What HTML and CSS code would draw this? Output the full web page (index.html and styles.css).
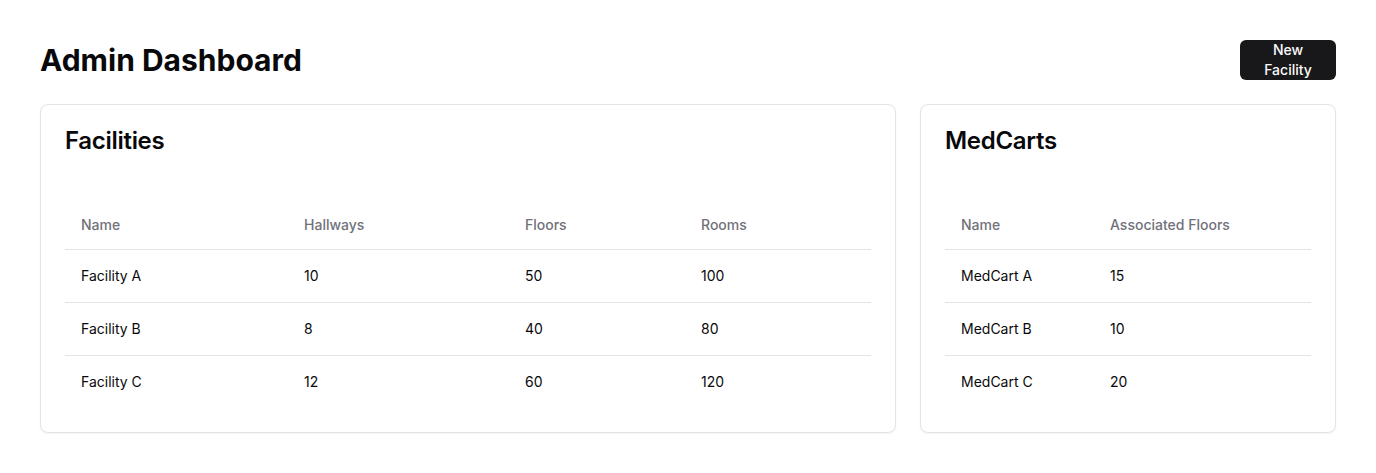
FILE: index.html
```html
<!DOCTYPE html>
<html lang="en">
<head>
<meta charset="utf-8">
<title>Admin Dashboard</title>
<link rel="stylesheet" href="styles.css">
</head>
<body>
<div class="page">
  <header class="topbar">
    <h1 class="page-title">Admin Dashboard</h1>
    <button class="btn">New Facility</button>
  </header>
  <div class="grid">
    <section class="card">
      <h2 class="card-title">Facilities</h2>
      <table class="table">
        <colgroup>
          <col class="c-f1"><col class="c-f2"><col class="c-f3"><col>
        </colgroup>
        <thead>
          <tr><th>Name</th><th>Hallways</th><th>Floors</th><th>Rooms</th></tr>
        </thead>
        <tbody>
          <tr><td>Facility A</td><td>10</td><td>50</td><td>100</td></tr>
          <tr><td>Facility B</td><td>8</td><td>40</td><td>80</td></tr>
          <tr><td>Facility C</td><td>12</td><td>60</td><td>120</td></tr>
        </tbody>
      </table>
    </section>
    <section class="card">
      <h2 class="card-title">MedCarts</h2>
      <table class="table">
        <colgroup>
          <col class="c-m1"><col>
        </colgroup>
        <thead>
          <tr><th>Name</th><th>Associated Floors</th></tr>
        </thead>
        <tbody>
          <tr><td>MedCart A</td><td>15</td></tr>
          <tr><td>MedCart B</td><td>10</td></tr>
          <tr><td>MedCart C</td><td>20</td></tr>
        </tbody>
      </table>
    </section>
  </div>
</div>
</body>
</html>
```
FILE: styles.css
```css
* { box-sizing: border-box; }
body {
  margin: 0;
  background: #ffffff;
  font-family: Inter, "Noto Sans", sans-serif;
  color: #09090b;
}
.page { padding: 40px; }
.topbar {
  display: flex;
  align-items: center;
  justify-content: space-between;
  margin-bottom: 24px;
}
.page-title {
  margin: 0;
  font-size: 30px;
  line-height: 36px;
  font-weight: 700;
}
.btn {
  width: 96px;
  height: 40px;
  padding: 0 16px;
  border: none;
  border-radius: 6px;
  background: #18181b;
  color: #fafafa;
  font-family: Inter, "Noto Sans", sans-serif;
  font-size: 14px;
  font-weight: 500;
  line-height: 20px;
}
.grid {
  display: grid;
  grid-template-columns: minmax(0, 856fr) minmax(0, 416fr);
  gap: 24px;
}
.card {
  border: 1px solid #e4e4e7;
  border-radius: 8px;
  background: #fff;
  box-shadow: 0 1px 2px rgba(0,0,0,0.05);
  padding: 24px;
}
.card-title {
  margin: 0 0 48px;
  font-size: 24px;
  line-height: 24px;
  font-weight: 600;
  letter-spacing: -0.3px;
}
.table {
  width: 100%;
  border-collapse: collapse;
  font-size: 14px;
}
.table th {
  height: 48px;
  padding: 0 16px;
  text-align: left;
  font-weight: 500;
  color: #71717a;
  border-bottom: 1px solid #e4e4e7;
}
.table td {
  padding: 16px;
  line-height: 20px;
  border-bottom: 1px solid #e4e4e7;
}
.table tbody tr:last-child td { border-bottom: none; }
.c-f1 { width: 223px; }
.c-f2 { width: 221px; }
.c-f3 { width: 176px; }
.c-m1 { width: 149px; }
```
